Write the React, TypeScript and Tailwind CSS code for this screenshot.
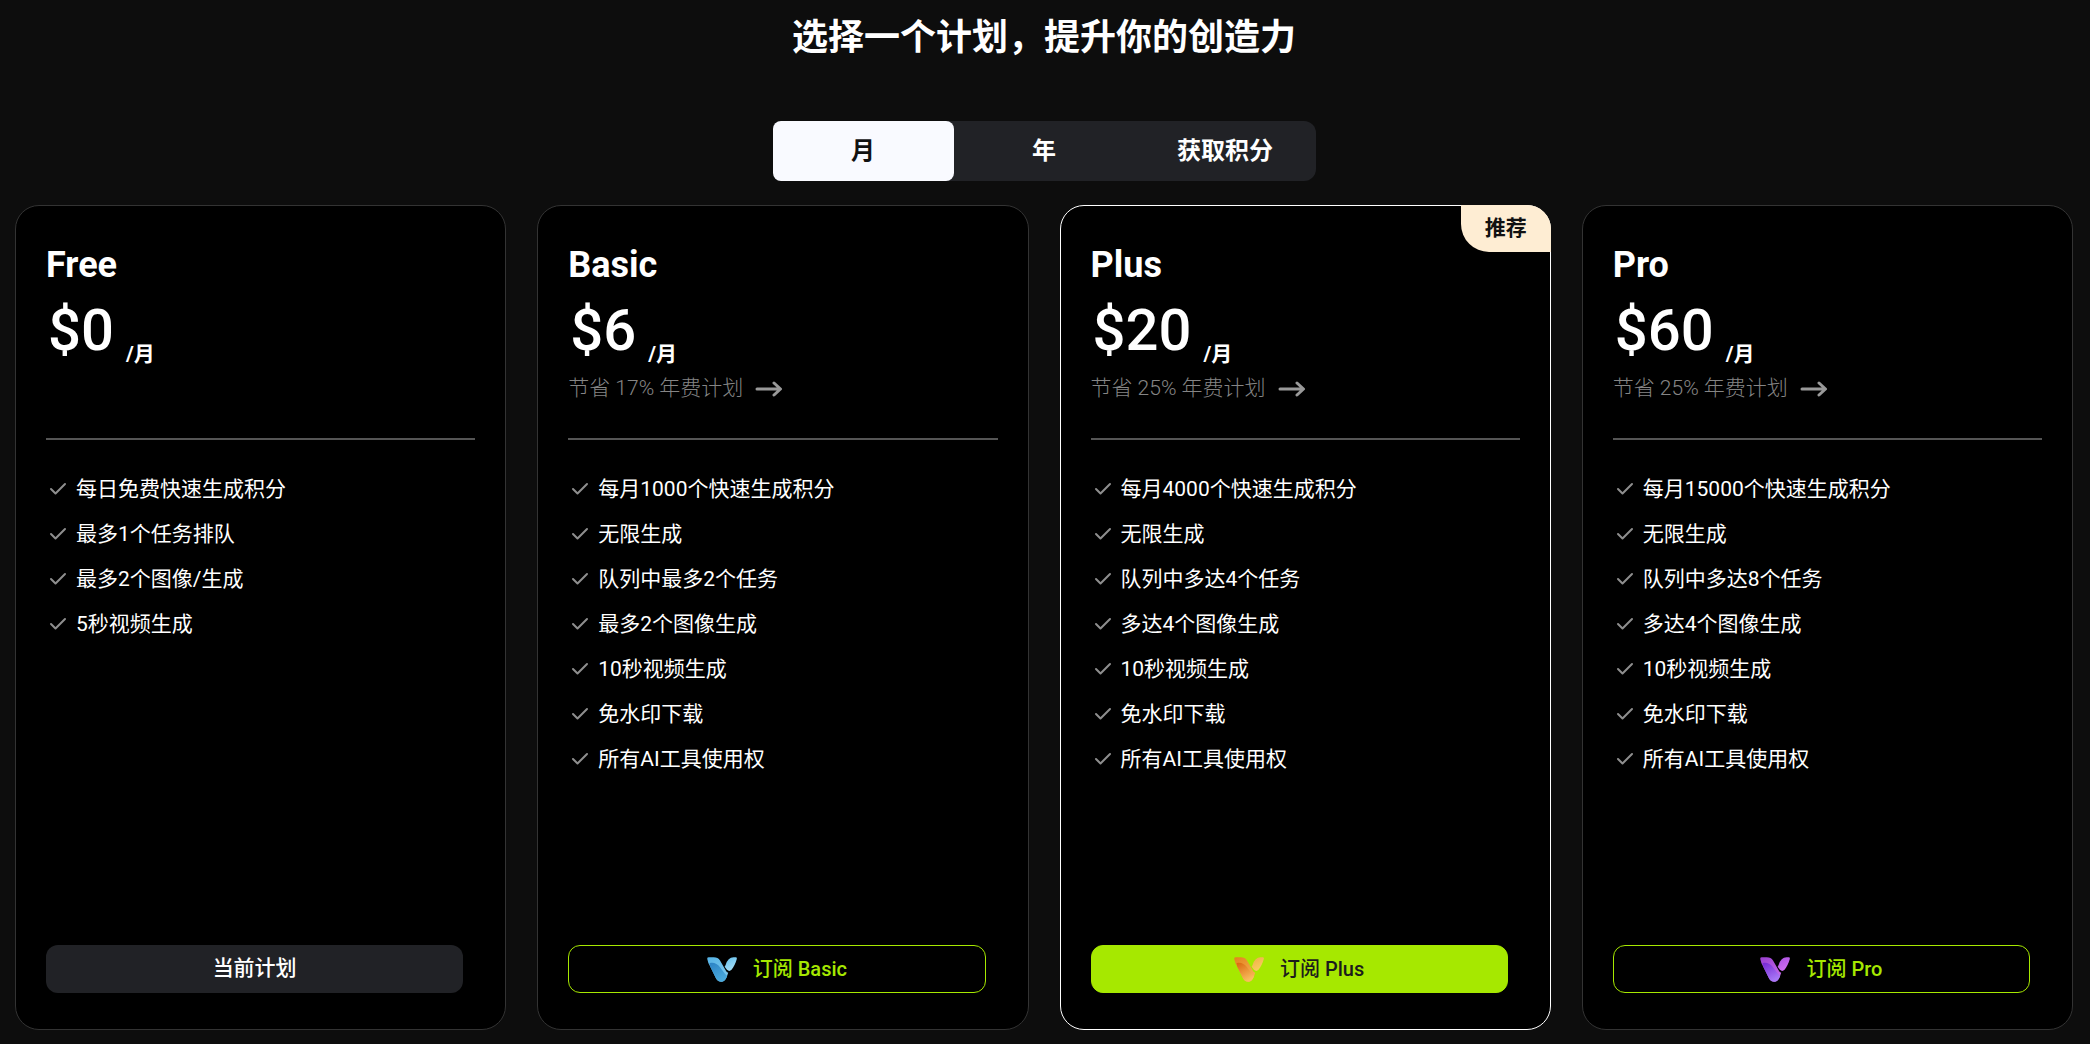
import { useId, useState } from "react";

type Tone = { band: [string, string]; arm: [string, string]; wing: [string, string] };

type Plan = {
  name: string;
  price: string;
  saving?: string;
  features: string[];
  tone?: Tone;
  recommended?: boolean;
};

const plans: Plan[] = [
  {
    name: "Free",
    price: "$0",
    features: ["每日免费快速生成积分", "最多1个任务排队", "最多2个图像/生成", "5秒视频生成"],
  },
  {
    name: "Basic",
    price: "$6",
    saving: "节省 17% 年费计划",
    tone: { band: ["#55b3e6", "#7cc8ee"], arm: ["#2b82c4", "#4aa9dc"], wing: ["#5fbdec", "#a6def6"] },
    features: [
      "每月1000个快速生成积分",
      "无限生成",
      "队列中最多2个任务",
      "最多2个图像生成",
      "10秒视频生成",
      "免水印下载",
      "所有AI工具使用权",
    ],
  },
  {
    name: "Plus",
    price: "$20",
    saving: "节省 25% 年费计划",
    recommended: true,
    tone: { band: ["#e2831c", "#f7b253"], arm: ["#d9660c", "#f9bd5e"], wing: ["#f1ab4a", "#f8d05c"] },
    features: [
      "每月4000个快速生成积分",
      "无限生成",
      "队列中多达4个任务",
      "多达4个图像生成",
      "10秒视频生成",
      "免水印下载",
      "所有AI工具使用权",
    ],
  },
  {
    name: "Pro",
    price: "$60",
    saving: "节省 25% 年费计划",
    tone: { band: ["#9a3fd0", "#c46bea"], arm: ["#7526d2", "#a878f6"], wing: ["#a94fe0", "#cf6ff2"] },
    features: [
      "每月15000个快速生成积分",
      "无限生成",
      "队列中多达8个任务",
      "多达4个图像生成",
      "10秒视频生成",
      "免水印下载",
      "所有AI工具使用权",
    ],
  },
];

const tabs = ["月", "年", "获取积分"];

function Logo({ tone }: { tone: Tone }) {
  const id = useId();
  const gradient = (key: string, [from, to]: [string, string]) => (
    <linearGradient id={id + key} x1="0" y1="0" x2="0.5" y2="1">
      <stop offset="0" stopColor={from} />
      <stop offset="1" stopColor={to} />
    </linearGradient>
  );
  return (
    <svg viewBox="0 0 90 76" className="h-[25px] w-[30px] shrink-0" aria-hidden="true">
      <defs>
        {gradient("b", tone.band)}
        {gradient("a", tone.arm)}
        {gradient("w", tone.wing)}
      </defs>
      <path
        d="M0 5Q0 1 5 1H20Q33 1 39 11L56 40Q59 46 64 48L58 64Q53 75 43 75Q33 75 27 65L9 29Q2 17 0 5Z"
        fill={`url(#${id}b)`}
      />
      <path
        d="M7 19C18 15 31 20 39 31L54 51Q59 57 61 57L58 64Q53 75 43 75Q33 75 27 65L9 29Z"
        fill={`url(#${id}a)`}
      />
      <path
        d="M56 24Q63 2 80 1H87Q91 1 90 6C86 20 81 30 74 39Q67 46 60 39L53 30Z"
        fill={`url(#${id}w)`}
      />
    </svg>
  );
}

function Arrow() {
  return (
    <svg
      viewBox="0 0 28 16"
      className="h-4 w-7 shrink-0"
      fill="none"
      stroke="#999"
      strokeWidth="3"
      strokeLinecap="round"
      strokeLinejoin="round"
      aria-hidden="true"
    >
      <path d="M2 8H25M19 2L25.500 8L19 14" />
    </svg>
  );
}

function Check() {
  return (
    <svg
      viewBox="0 0 22 22"
      className="mr-2 h-[22px] w-[22px] shrink-0"
      fill="none"
      stroke="#8e8e8e"
      strokeWidth="2"
      strokeLinecap="round"
      strokeLinejoin="round"
      aria-hidden="true"
    >
      <path d="M5 10L9.500 14.500L19 5" />
    </svg>
  );
}

function PlanCard({ plan }: { plan: Plan }) {
  return (
    <article
      className={`relative flex min-h-[825px] flex-col rounded-3xl border bg-black px-[30px] pt-[37px] pb-9 ${
        plan.recommended ? "border-white" : "border-[#333]"
      }`}
    >
      {plan.recommended && (
        <span className="absolute -top-px -right-px flex h-[47px] w-[90px] items-center justify-center rounded-tr-3xl rounded-bl-[28px] bg-[#feedd3] text-[21px] font-bold text-[#111]">
          推荐
        </span>
      )}
      <h2 className="text-[36px] leading-[44px] font-bold">{plan.name}</h2>
      <p className="flex h-[86px] items-start pl-0.5">
        <span className="pt-[11px] text-[58px] leading-[64px] font-medium">{plan.price}</span>
        <span className="ml-3 pt-[51px] text-[21px] leading-[32px] font-bold">/月</span>
      </p>
      <div className="h-[65px]">
        {plan.saving && (
          <a href="#year" className="flex h-8 w-fit items-center gap-3 text-[21px] font-light text-[#858585]">
            {plan.saving}
            <Arrow />
          </a>
        )}
      </div>
      <hr className="h-0.5 border-0 bg-[#555]" />
      <ul className="mt-[27px]">
        {plan.features.map((feature) => (
          <li key={feature} className="flex h-[45px] items-center text-[21px]">
            <Check />
            {feature}
          </li>
        ))}
      </ul>
      {plan.tone ? (
        <button
          type="button"
          className={`mt-auto mr-3 flex h-12 items-center justify-center gap-4 rounded-xl border border-[#a6e800] text-[20px] font-medium ${
            plan.recommended ? "bg-[#a6e800] text-[#1c1c1c]" : "text-[#a6e800]"
          }`}
        >
          <Logo tone={plan.tone} />
          订阅 {plan.name}
        </button>
      ) : (
        <button
          type="button"
          className="mt-auto mr-3 flex h-12 items-center justify-center rounded-xl bg-[#212226] text-[21px] font-medium"
        >
          当前计划
        </button>
      )}
    </article>
  );
}

export default function App() {
  const [active, setActive] = useState(0);
  return (
    <main className="min-h-screen bg-[#0d0d0d] pr-[17px] pb-3.5 pl-[15px] font-[Roboto,'Noto_Sans_CJK_SC',sans-serif] text-white">
      <header className="flex flex-col items-center pt-3.5">
        <h1 className="text-[36px] leading-[48px] font-bold">选择一个计划，提升你的创造力</h1>
        <div role="tablist" className="mt-[59px] grid h-[60px] w-[543px] grid-cols-3 rounded-xl bg-[#212226]">
          {tabs.map((tab, i) => (
            <button
              key={tab}
              type="button"
              role="tab"
              aria-selected={i === active}
              onClick={() => setActive(i)}
              className={`rounded-lg text-2xl font-bold ${i === active ? "bg-[#f9faff] text-[#111]" : "text-white"}`}
            >
              {tab}
            </button>
          ))}
        </div>
      </header>
      <section className="mt-6 grid grid-cols-4 gap-[31px]">
        {plans.map((plan) => (
          <PlanCard key={plan.name} plan={plan} />
        ))}
      </section>
    </main>
  );
}
